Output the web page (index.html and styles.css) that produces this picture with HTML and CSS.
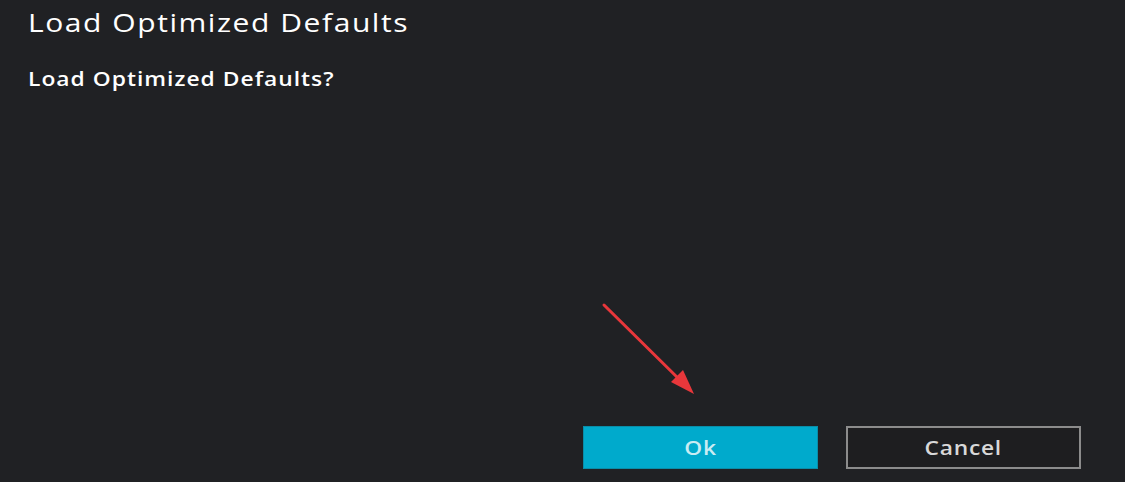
FILE: index.html
```html
<!DOCTYPE html>
<html lang="en">
<head>
  <meta charset="UTF-8">
  <title>Load Optimized Defaults</title>
  <link rel="stylesheet" href="styles.css">
</head>
<body>
  <div class="dialog">
    <h1 class="title">Load Optimized Defaults</h1>
    <p class="message">Load Optimized Defaults?</p>

    <div class="actions">
      <button class="btn btn-ok"><span class="label">Ok</span></button>
      <button class="btn btn-cancel"><span class="label">Cancel</span></button>
    </div>

    <svg class="pointer" width="1125" height="482" viewBox="0 0 1125 482">
      <line x1="604" y1="305" x2="683" y2="383" stroke="#e8373b" stroke-width="3" stroke-linecap="round"/>
      <polygon points="694,394 671,382 683,370" fill="#e8373b"/>
    </svg>
  </div>
</body>
</html>
```

FILE: styles.css
```css
body {
  margin: 0;
  background: #202124;
  font-family: 'Open Sans', 'Noto Sans', sans-serif;
  color: #ffffff;
  overflow: hidden;
}

.dialog {
  position: relative;
  height: 482px;
  display: flex;
  flex-direction: column;
  padding: 0 44px 0 28px;
  box-sizing: border-box;
}

/* the firmware font is wide, so stretch the glyphs a little */
.title,
.message {
  align-self: flex-start;
  transform: scaleX(1.2);
  transform-origin: left center;
}

.title {
  margin: 5px 0 0;
  font-size: 25px;
  font-weight: 400;
  line-height: 34px;
  letter-spacing: 1.3px;
}

.message {
  margin: 27px 0 0;
  font-size: 19px;
  font-weight: 600;
  line-height: 26px;
  letter-spacing: 0.85px;
}

.actions {
  margin-top: auto;
  margin-bottom: 13px;
  display: flex;
  justify-content: flex-end;
  gap: 28px;
}

.btn {
  width: 235px;
  height: 43px;
  font-family: inherit;
  font-size: 19px;
  font-weight: 600;
  box-sizing: border-box;
}

.label {
  display: inline-block;
  transform: scaleX(1.2);
  letter-spacing: 0.6px;
}

.btn-ok {
  background: #00aacc;
  border: 1px solid #0a8da8;
  color: #c9ecf3;
}

.btn-cancel {
  background: #1e1e20;
  border: 2px solid #8c8c8c;
  color: #d8d8d8;
}

.pointer {
  position: absolute;
  left: 0;
  top: 0;
  pointer-events: none;
}
```
